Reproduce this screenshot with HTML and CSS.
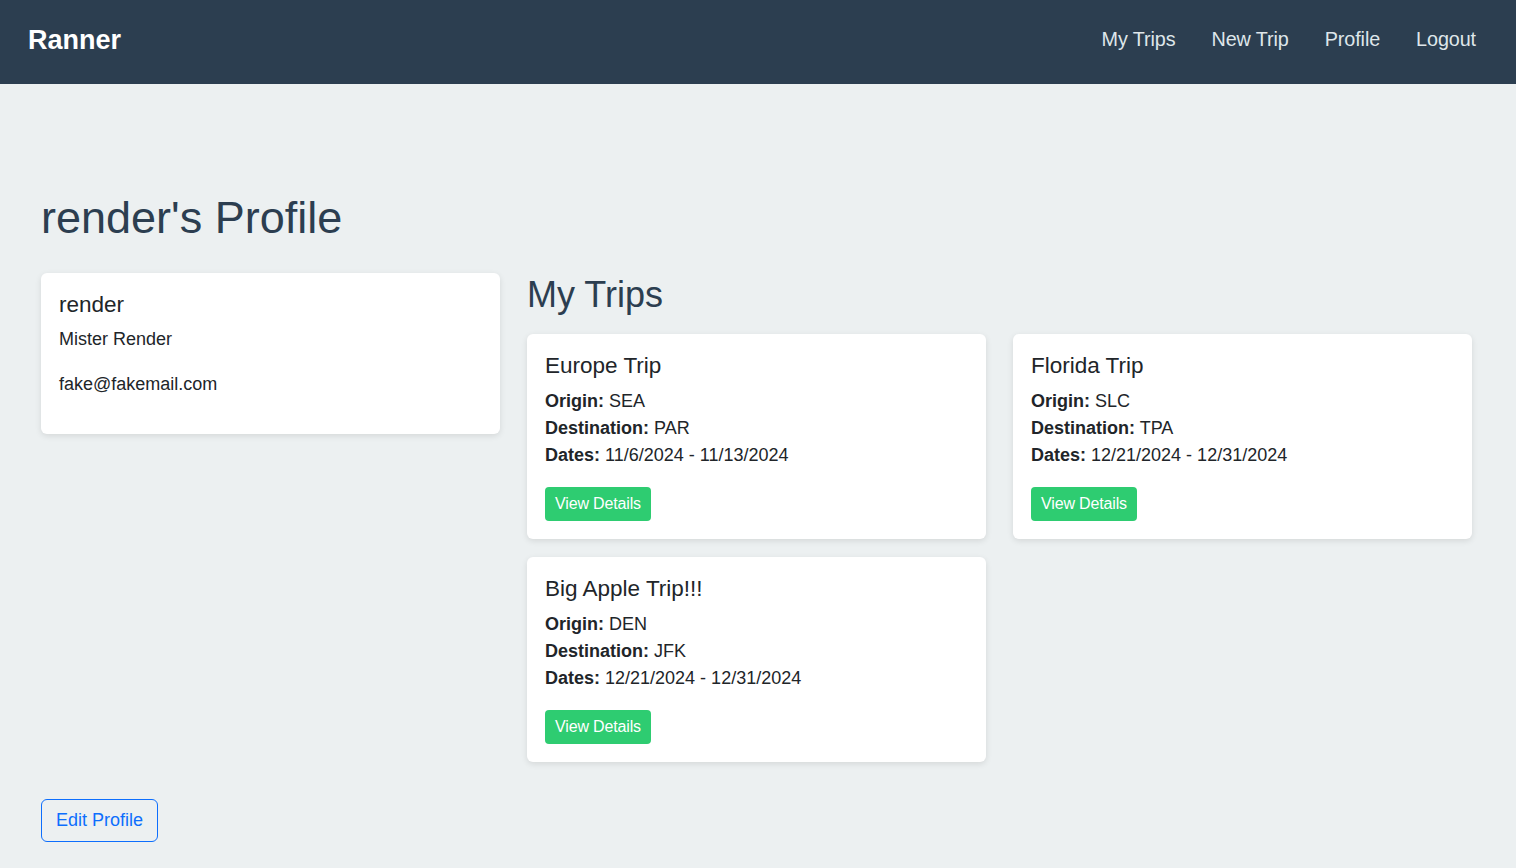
FILE: index.html
```html
<!DOCTYPE html>
<html lang="en">
<head>
<meta charset="utf-8">
<title>Ranner</title>
<link rel="stylesheet" href="styles.css">
</head>
<body>
<nav class="navbar">
  <a class="brand" href="#">Ranner</a>
  <div class="nav-links">
    <a href="#">My Trips</a>
    <a href="#">New Trip</a>
    <a href="#">Profile</a>
    <a href="#">Logout</a>
  </div>
</nav>
<main class="page">
  <h1 class="page-title">render's Profile</h1>
  <div class="row">
    <div class="col-left">
      <div class="card">
        <h5 class="card-title">render</h5>
        <p class="card-text">Mister Render</p>
        <p class="card-text">fake@fakemail.com</p>
      </div>
    </div>
    <div class="col-right">
      <h2 class="section-title">My Trips</h2>
      <div class="trip-grid">
        <div class="card trip-card">
          <h5 class="card-title">Europe Trip</h5>
          <div class="line"><strong>Origin:</strong> SEA</div>
          <div class="line"><strong>Destination:</strong> PAR</div>
          <div class="line"><strong>Dates:</strong> 11/6/2024 - 11/13/2024</div>
          <a class="btn-green" href="#">View Details</a>
        </div>
        <div class="card trip-card">
          <h5 class="card-title">Florida Trip</h5>
          <div class="line"><strong>Origin:</strong> SLC</div>
          <div class="line"><strong>Destination:</strong> TPA</div>
          <div class="line"><strong>Dates:</strong> 12/21/2024 - 12/31/2024</div>
          <a class="btn-green" href="#">View Details</a>
        </div>
        <div class="card trip-card">
          <h5 class="card-title">Big Apple Trip!!!</h5>
          <div class="line"><strong>Origin:</strong> DEN</div>
          <div class="line"><strong>Destination:</strong> JFK</div>
          <div class="line"><strong>Dates:</strong> 12/21/2024 - 12/31/2024</div>
          <a class="btn-green" href="#">View Details</a>
        </div>
      </div>
    </div>
  </div>
  <a class="btn-outline" href="#">Edit Profile</a>
</main>
</body>
</html>
```

FILE: styles.css
```css
* { box-sizing: border-box; }
html, body {
  margin: 0;
  padding: 0;
}
body {
  background: #ecf0f1;
  font-family: "Liberation Sans", Arial, sans-serif;
  font-size: 18px;
  line-height: 1.5;
  color: #212529;
  min-height: 868px;
}
a { text-decoration: none; }

.navbar {
  height: 84px;
  background: #2c3e50;
  display: flex;
  align-items: center;
  justify-content: space-between;
  padding: 0 40px 4px 28px;
}
.brand {
  color: #ffffff;
  font-weight: bold;
  font-size: 27px;
  line-height: 1.2;
}
.nav-links {
  display: flex;
  gap: 36px;
}
.nav-links a {
  color: #dfe6ea;
  font-size: 19.8px;
  line-height: 1.2;
  letter-spacing: -0.1px;
}

.page {
  padding: 107px 44px 26px 41px;
}
.page-title {
  margin: 0 0 28px;
  font-size: 45px;
  font-weight: normal;
  line-height: 1.2;
  color: #2c3e50;
}
.row {
  display: grid;
  grid-template-columns: 459px 1fr;
  gap: 27px;
  align-items: start;
}
.card {
  background: #fff;
  border-radius: 6px;
  box-shadow: 0 2px 6px rgba(0, 0, 0, 0.1);
  padding: 18px;
}
.card-title {
  margin: 0 0 8px;
  font-size: 22.5px;
  font-weight: normal;
  line-height: 27px;
  color: #212529;
}
.trip-card .card-title {
  margin-bottom: 9px;
}
.card-text {
  margin: 0 0 18px;
}
.section-title {
  margin: 0 0 18px;
  font-size: 36px;
  font-weight: normal;
  line-height: 1.2;
  color: #2c3e50;
}
.trip-grid {
  display: grid;
  grid-template-columns: 1fr 1fr;
  column-gap: 27px;
  row-gap: 18px;
}
.line {
  line-height: 27px;
}
.line strong {
  font-weight: bold;
}
.btn-green {
  display: inline-block;
  margin-top: 18px;
  background: #2ecc71;
  color: #fff;
  font-size: 16px;
  line-height: 24px;
  padding: 5px 10px;
  border-radius: 4px;
  letter-spacing: -0.15px;
}
.btn-outline {
  display: inline-block;
  margin-top: 37px;
  border: 1px solid #0d6efd;
  color: #0d6efd;
  font-size: 18px;
  line-height: 27px;
  padding: 7px 14px;
  border-radius: 6px;
}
```
